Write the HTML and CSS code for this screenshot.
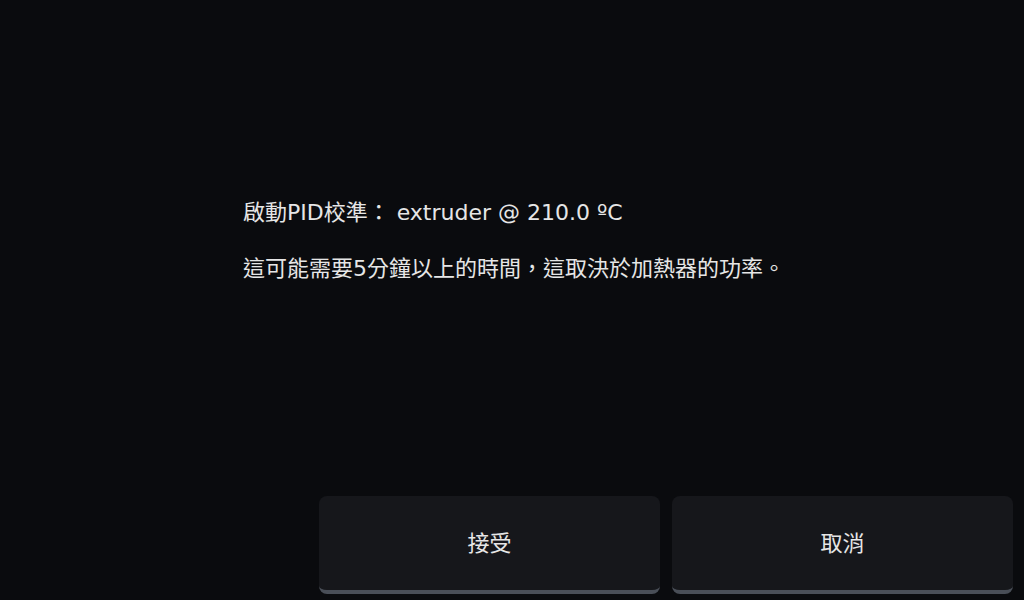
FILE: index.html
```html
<!DOCTYPE html>
<html lang="zh-TW">
    <head>
        <meta charset="UTF-8">
        <meta name="viewport" content="width=device-width, initial-scale=1.0">
        <title>PID</title>
        <link rel="stylesheet" href="styles.css">
    </head>
    <body>
        <div class="screen">
            <div class="message">
                <p>啟動PID校準：&nbsp;extruder @ 210.0 ºC</p>
                <p>這可能需要5分鐘以上的時間<span class="cjk">，</span>這取決於加熱器的功率<span class="cjk">。</span></p>
            </div>
            <div class="buttons">
                <button class="btn">接受</button>
                <button class="btn">取消</button>
            </div>
        </div>
    </body>
</html>
```

FILE: styles.css
```css
html, body {
    margin: 0;
    padding: 0;
    background-color: #0a0b0e;
}
body {
    font-family: "DejaVu Sans", "Noto Sans CJK TC", sans-serif;
    font-size: 22px;
    color: #e6e6e6;
}
.screen {
    width: 1024px;
    height: 600px;
    display: flex;
    flex-direction: column;
}
.message {
    flex: 1;
    padding: 199px 0 0 243px;
}
.message p {
    margin: 0 0 25px 0;
    line-height: 28px;
}
.cjk {
    font-family: "Noto Sans CJK TC", sans-serif;
}
.buttons {
    display: flex;
    gap: 12px;
    padding: 0 11px 6px 319px;
}
.btn {
    width: 341px;
    height: 98px;
    background-color: #16171b;
    border: none;
    border-bottom: 4px solid #494e57;
    border-radius: 8px;
    color: #e6e6e6;
    font-family: inherit;
    font-size: 22px;
    padding: 0 0 4px 0;
}
```
